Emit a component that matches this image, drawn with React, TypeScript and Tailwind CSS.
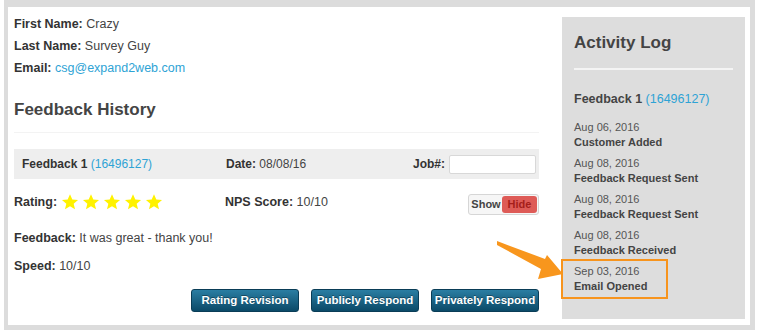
const font = { fontFamily: '"Liberation Sans", Arial, sans-serif' }

function Star() {
  return (
    <svg viewBox="0 0 24 24" className="w-[18px] h-[18px]">
      <path
        d="M12 1.5l3.1 7.1 7.6.6-5.8 5 1.8 7.5L12 17.7l-6.7 4 1.8-7.5-5.8-5 7.6-.6z"
        fill="#fff200"
      />
    </svg>
  )
}

const log = [
  { date: 'Aug 06, 2016', label: 'Customer Added' },
  { date: 'Aug 08, 2016', label: 'Feedback Request Sent' },
  { date: 'Aug 08, 2016', label: 'Feedback Request Sent' },
  { date: 'Aug 08, 2016', label: 'Feedback Received' },
]

function ActionButton({ children }: { children: string }) {
  return (
    <button className="w-[108px] h-[23px] rounded-[3px] border border-[#0a3d57] bg-gradient-to-b from-[#2a7ea3] to-[#0b4a68] text-white text-[11.5px] font-bold [text-shadow:0_-1px_0_rgba(0,0,0,0.35)]">
      {children}
    </button>
  )
}

export default function App() {
  return (
    <div className="relative w-[760px] h-[333px] bg-white pl-[4px] pr-[5px] pb-[3px]" style={font}>
      <div className="flex h-[330px] border-[#dcdcdc] border-t-[7px] border-l-[4px] border-r-[5px] border-b-[5px] bg-white">
        {/* Customer + feedback */}
        <div className="w-[525px] shrink-0 ml-[6px] pt-[6px] text-[12.5px] text-[#444]">
          <div className="leading-[22px]">
            <b className="text-[#333]">First Name:</b> Crazy
          </div>
          <div className="leading-[22px]">
            <b className="text-[#333]">Last Name:</b> Survey Guy
          </div>
          <div className="leading-[22px]">
            <b className="text-[#333]">Email:</b>{' '}
            <span className="text-[#2ea3d5]">csg@expand2web.com</span>
          </div>

          <h2 className="mt-[19px] text-[17px] leading-[24px] font-bold text-[#444]">Feedback History</h2>
          <div className="mt-[10px] h-px bg-[#f3f3f3]" />

          <div className="mt-[16px] h-[30px] bg-[#eeeeee] flex items-center pl-[8px] pr-[3px] text-[12px]">
            <div className="w-[204px]">
              <b className="text-[#333]">Feedback 1</b>{' '}
              <span className="text-[#2ea3d5]">(16496127)</span>
            </div>
            <div className="flex-1">
              <b className="text-[#333]">Date:</b> 08/08/16
            </div>
            <b className="text-[#333] mr-[4px]">Job#:</b>
            <input className="w-[87px] h-[19px] bg-white border border-[#d8d8d8] rounded-[2px]" />
          </div>

          <div className="mt-[12px] h-[22px] flex items-center">
            <div className="w-[211px] flex items-center">
              <b className="text-[#333] mr-[4px]">Rating:</b>
              <div className="flex gap-[3px]">
                <Star />
                <Star />
                <Star />
                <Star />
                <Star />
              </div>
            </div>
            <div className="flex-1">
              <b className="text-[#333]">NPS Score:</b> 10/10
            </div>
            <div className="mt-[4px] flex items-center h-[21px] w-[71px] rounded-[3px] border border-[#d6d6d6] bg-[#f6f6f6] p-[1px] text-[11px] font-bold">
              <span className="flex-1 text-center text-[#444]">Show</span>
              <span className="w-[35px] h-[17px] leading-[17px] rounded-[3px] bg-[#de5b57] text-center text-[#a51e1b]">
                Hide
              </span>
            </div>
          </div>

          <div className="mt-[15px] leading-[20px]">
            <b className="text-[#333]">Feedback:</b> It was great - thank you!
          </div>
          <div className="mt-[8px] leading-[20px]">
            <b className="text-[#333]">Speed:</b> 10/10
          </div>

          <div className="mt-[13px] flex justify-end gap-[12px]">
            <ActionButton>Rating Revision</ActionButton>
            <ActionButton>Publicly Respond</ActionButton>
            <ActionButton>Privately Respond</ActionButton>
          </div>
        </div>

        {/* Activity log */}
        <div className="ml-[23px] mt-[10px] mb-[6px] w-[183px] shrink-0 bg-[#dddddd] px-[12px] pt-[14px]">
          <h2 className="text-[17px] leading-[24px] font-bold text-[#444]">Activity Log</h2>
          <div className="mt-[13px] h-[2px] bg-[#f4f4f4]" />
          <div className="mt-[21px] text-[12.5px] leading-[16px]">
            <b className="text-[#444]">Feedback 1</b>{' '}
            <span className="text-[#2ea3d5]">(16496127)</span>
          </div>
          <div className="mt-[13px] flex flex-col gap-[6px] text-[11px] leading-[15px]">
            {log.map((item, i) => (
              <div key={i}>
                <div className="text-[#555]">{item.date}</div>
                <div className="font-bold text-[#444]">{item.label}</div>
              </div>
            ))}
            <div className="-mt-[5px] -ml-[13px] w-[107px] border-2 border-[#f7941d] pl-[11px] pt-[3px] pb-[3px]">
              <div className="text-[#555]">Sep 03, 2016</div>
              <div className="font-bold text-[#444]">Email Opened</div>
            </div>
          </div>
        </div>
      </div>

      {/* pointer arrow */}
      <svg className="absolute left-0 top-0 pointer-events-none" width="760" height="333">
        <path d="M497 241 L545 259 L547 255 L563 274 L538 279 L541 269 L497 245 Z" fill="#f8961d" />
      </svg>
    </div>
  )
}
